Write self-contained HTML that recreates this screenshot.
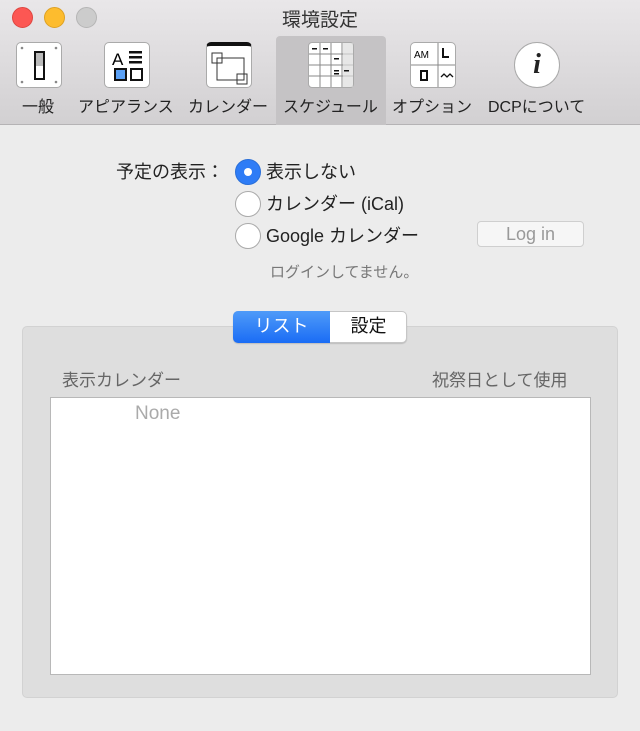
<!DOCTYPE html>
<html><head><meta charset="utf-8"><style>
*{margin:0;padding:0;box-sizing:border-box}
body{width:640px;height:731px;background:#ececec;font-family:"Liberation Sans","Noto Sans CJK JP",sans-serif;color:#222;position:relative;overflow:hidden}
.abs{position:absolute}
#tb{left:0;top:0;width:640px;height:125px;background:linear-gradient(#e9e7e9,#d2d0d2);border-bottom:1px solid #b5b3b5}
.dot{width:21px;height:21px;border-radius:50%;top:7px}
.lbl{top:93px;font-size:16px;white-space:nowrap;color:#222}
.ic{top:42px;width:46px;height:46px;background:#fff;border:1px solid #aaa;border-radius:5px}
.t{font-size:18px;line-height:26px;white-space:nowrap}
.radio{width:26px;height:26px;border-radius:50%;background:#fff;border:1px solid #aaa}
</style></head><body>
<div id="tb" class="abs"></div>
<div class="abs dot" style="left:12px;background:#fc5753;border:1px solid #de4640"></div>
<div class="abs dot" style="left:44px;background:#fdbc2e;border:1px solid #dea123"></div>
<div class="abs dot" style="left:76px;background:#ccc;border:1px solid #b5b5b5"></div>
<div class="abs" style="left:282px;top:5px;font-size:19px;color:#333;white-space:nowrap">環境設定</div>
<div class="abs" style="left:276px;top:36px;width:110px;height:89px;background:#c5c3c5;border-radius:4px 4px 0 0"></div>

<div class="abs ic" style="left:16px"><svg width="44" height="44"><circle cx="5" cy="5" r="1.3" fill="#888"/><circle cx="39" cy="5" r="1.3" fill="#888"/><circle cx="5" cy="39" r="1.3" fill="#888"/><circle cx="39" cy="39" r="1.3" fill="#888"/><rect x="18" y="9" width="9" height="27" fill="#fff" stroke="#111" stroke-width="2"/><rect x="19" y="10" width="7" height="13" fill="#bbb"/></svg></div>
<div class="abs lbl" style="left:22px">一般</div>

<div class="abs ic" style="left:104px"><svg width="44" height="44"><text x="7" y="22" font-size="17" font-family="Liberation Sans">A</text><rect x="24" y="8" width="13" height="2.5" fill="#111"/><rect x="24" y="13" width="13" height="2.5" fill="#111"/><rect x="24" y="18" width="13" height="2.5" fill="#111"/><rect x="10" y="26" width="11" height="11" fill="#5aa0f5" stroke="#111" stroke-width="2"/><rect x="26" y="26" width="11" height="11" fill="#fff" stroke="#111" stroke-width="2"/></svg></div>
<div class="abs lbl" style="left:78px">アピアランス</div>

<div class="abs ic" style="left:206px;border-top:4px solid #111"><svg width="44" height="42"><rect x="5" y="7" width="10" height="10" fill="none" stroke="#333"/><rect x="10" y="12" width="27" height="22" fill="none" stroke="#333"/><rect x="30" y="28" width="10" height="10" fill="none" stroke="#333"/></svg></div>
<div class="abs lbl" style="left:188px">カレンダー</div>

<div class="abs ic" style="left:308px;border-radius:4px"><svg width="44" height="44"><g stroke="#888" stroke-width="1"><line x1="0" y1="11" x2="44" y2="11"/><line x1="0" y1="22" x2="44" y2="22"/><line x1="0" y1="33" x2="44" y2="33"/><line x1="11" y1="0" x2="11" y2="44"/><line x1="22" y1="0" x2="22" y2="44"/><line x1="33" y1="0" x2="33" y2="44"/></g><rect x="34" y="0" width="10" height="44" fill="#ddd" opacity=".7"/><g fill="#111"><rect x="3" y="5" width="5" height="1.5"/><rect x="14" y="5" width="5" height="1.5"/><rect x="25" y="15" width="5" height="1.5"/><rect x="25" y="27" width="5" height="1.5"/><rect x="25" y="30" width="5" height="1.5"/><rect x="35" y="27" width="5" height="1.5"/></g></svg></div>
<div class="abs lbl" style="left:283px">スケジュール</div>

<div class="abs ic" style="left:410px"><svg width="44" height="44"><line x1="0" y1="22" x2="44" y2="22" stroke="#888"/><line x1="27" y1="0" x2="27" y2="44" stroke="#888"/><text x="3" y="15" font-size="10" font-family="Liberation Sans">AM</text><path d="M32 5v9h6" stroke="#111" stroke-width="2" fill="none"/><rect x="10" y="28" width="6" height="9" fill="none" stroke="#111" stroke-width="2"/><path d="M30 34l3-3 3 3 3-3 3 3" stroke="#111" stroke-width="1.3" fill="none"/></svg></div>
<div class="abs lbl" style="left:392px">オプション</div>

<div class="abs" style="left:514px;top:42px;width:46px;height:46px;border-radius:50%;background:#fff;border:1px solid #aaa;text-align:center;font:italic bold 28px/44px 'Liberation Serif',serif">i</div>
<div class="abs lbl" style="left:488px">DCPについて</div>

<div class="abs t" style="left:116px;top:159px">予定の表示：</div>
<div class="abs radio" style="left:235px;top:159px;background:#2e7cf6;border-color:#2a6fd8"><div style="width:8px;height:8px;background:#fff;border-radius:50%;margin:8px auto"></div></div>
<div class="abs t" style="left:266px;top:159px">表示しない</div>
<div class="abs radio" style="left:235px;top:191px"></div>
<div class="abs t" style="left:266px;top:191px">カレンダー (iCal)</div>
<div class="abs radio" style="left:235px;top:223px"></div>
<div class="abs t" style="left:266px;top:223px">Google カレンダー</div>
<div class="abs" style="left:477px;top:221px;width:107px;height:26px;background:#f6f6f6;border:1px solid #cfcfcf;border-radius:4px;text-align:center;font-size:18px;line-height:24px;color:#999">Log in</div>
<div class="abs" style="left:270px;top:261px;font-size:15px;color:#777;white-space:nowrap">ログインしてません。</div>

<div class="abs" style="left:22px;top:326px;width:596px;height:372px;background:#dedede;border:1px solid #d2d2d2;border-radius:5px"></div>
<div class="abs" style="left:233px;top:311px;width:174px;height:32px;background:#fff;border:1px solid #c6c6c6;border-radius:5px;box-shadow:0 1px 1px rgba(0,0,0,.15)"></div>
<div class="abs" style="left:233px;top:311px;width:97px;height:32px;background:linear-gradient(#4f9bf8,#1a6cf5);border-radius:5px 0 0 5px;color:#fff;font-size:18px;text-align:center;line-height:31px">リスト</div>
<div class="abs" style="left:330px;top:311px;width:77px;height:32px;color:#111;font-size:18px;text-align:center;line-height:31px">設定</div>
<div class="abs" style="left:62px;top:366px;font-size:17px;color:#666;white-space:nowrap">表示カレンダー</div>
<div class="abs" style="left:432px;top:366px;font-size:17px;color:#666;white-space:nowrap">祝祭日として使用</div>
<div class="abs" style="left:50px;top:397px;width:541px;height:278px;background:#fff;border:1px solid #b8b8b8"></div>
<div class="abs" style="left:135px;top:403px;font-size:19px;color:#aaa">None</div>
</body></html>
